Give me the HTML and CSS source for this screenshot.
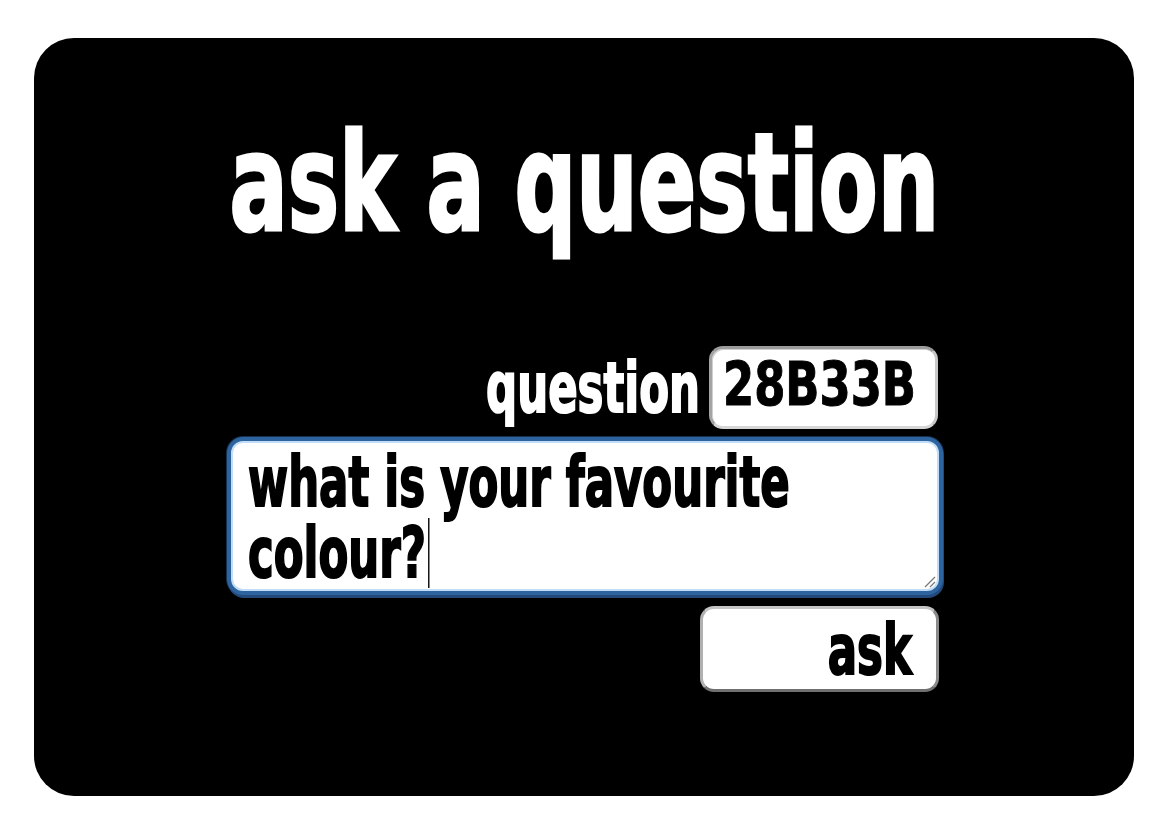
FILE: index.html
```html
<!DOCTYPE html>
<html lang="en">
<head>
    <meta charset="UTF-8">
    <meta name="viewport" content="width=device-width, initial-scale=1.0">
    <title>ask a question</title>
<link rel="stylesheet" href="styles.css">
</head>
<body>
    <div class="card">
        <h1 class="title"><span class="squash">ask a question</span></h1>
        <div class="form">
            <div class="row">
                <label class="label"><span class="squash">question</span></label>
                <div class="code-box"><span class="squash">28B33B</span></div>
            </div>
            <div class="textbox">
                <div class="squash textbox-text">what is your favourite<br>colour?<span class="caret"></span></div>
                <svg class="grip" width="12" height="12" viewBox="0 0 12 12">
                    <line x1="11" y1="1" x2="1" y2="11" stroke="#7a7a7a" stroke-width="1.2"/>
                    <line x1="11" y1="6" x2="6" y2="11" stroke="#7a7a7a" stroke-width="1.2"/>
                </svg>
            </div>
            <button class="ask"><span class="squash">ask</span></button>
        </div>
    </div>
</body>
</html>
```

FILE: styles.css
```css
*{
    margin: 0;
    padding: 0;
    box-sizing: border-box;
}
body{
    background: #fff;
    font-family: "DejaVu Sans Condensed", "DejaVu Sans", sans-serif;
    font-stretch: condensed;
    font-weight: bold;
}
.card{
    width: 1100px;
    height: 758px;
    margin: 38px 0 0 34px;
    background: #000;
    border-radius: 40px;
    padding-top: 77px;
}
/* impact-ish look: squeeze the glyphs sideways */
.squash{
    display: inline-block;
    transform: scaleX(0.69);
    white-space: nowrap;
}
.title{
    color: #fff;
    font-size: 136px;
    line-height: 136px;
    text-align: center;
    -webkit-text-stroke: 3px #fff;
}
.title .squash{
    transform: scaleX(0.705);
    transform-origin: center;
}
.form{
    width: 710px;
    margin: 95px auto 0;
    display: flex;
    flex-direction: column;
}
.row{
    display: flex;
    justify-content: flex-end;
    align-items: center;
    margin-right: 1px;
}
.label{
    color: #fff;
    font-size: 70px;
    line-height: 80px;
    margin-right: 9px;
    -webkit-text-stroke: 2px #fff;
}
.label .squash{
    transform-origin: right center;
}
.code-box{
    width: 229px;
    height: 83px;
    background: #fff;
    border: 3px solid;
    border-color: #9c9c9c #c8c8c8 #d6d6d6 #a4a4a4;
    border-radius: 14px;
    box-shadow: inset 1px 1px 0 #d0d0d0;
    font-size: 60px;
    line-height: 71px;
    padding-left: 11px;
    color: #000;
    -webkit-text-stroke: 1px #000;
}
.code-box .squash{
    transform: scaleX(0.83);
    transform-origin: left center;
}
.textbox{
    position: relative;
    margin: 12px 0 0 2px;
    height: 150px;
    background: #fff;
    border: 2px solid #c2def6;
    border-radius: 12px;
    box-shadow: 0 0 0 4px #2d64a0, 1px 3px 0 4px #22497a, 0 0 0 5px #16304f;
    padding: 4px 0 0 15px;
}
.textbox-text{
    transform-origin: left top;
    font-size: 70px;
    line-height: 71px;
    color: #000;
    -webkit-text-stroke: 2px #000;
}
.caret{
    display: inline-block;
    width: 2px;
    height: 70px;
    background: #000;
    vertical-align: -11px;
    margin-left: 3px;
    -webkit-text-stroke: 0;
}
.grip{
    position: absolute;
    right: 1px;
    bottom: 1px;
}
.ask{
    align-self: flex-end;
    width: 239px;
    height: 86px;
    margin-top: 15px;
    background: #fff;
    border: 3px solid;
    border-color: #c4c4c4 #8a8a8a #707070 #b0b0b0;
    border-radius: 14px;
    font-family: inherit;
    font-stretch: condensed;
    font-weight: bold;
    font-size: 70px;
    line-height: 77px;
    padding: 3px 24px 0 0;
    text-align: right;
    color: #000;
    -webkit-text-stroke: 2px #000;
}
.ask .squash{
    transform-origin: right center;
}
```
